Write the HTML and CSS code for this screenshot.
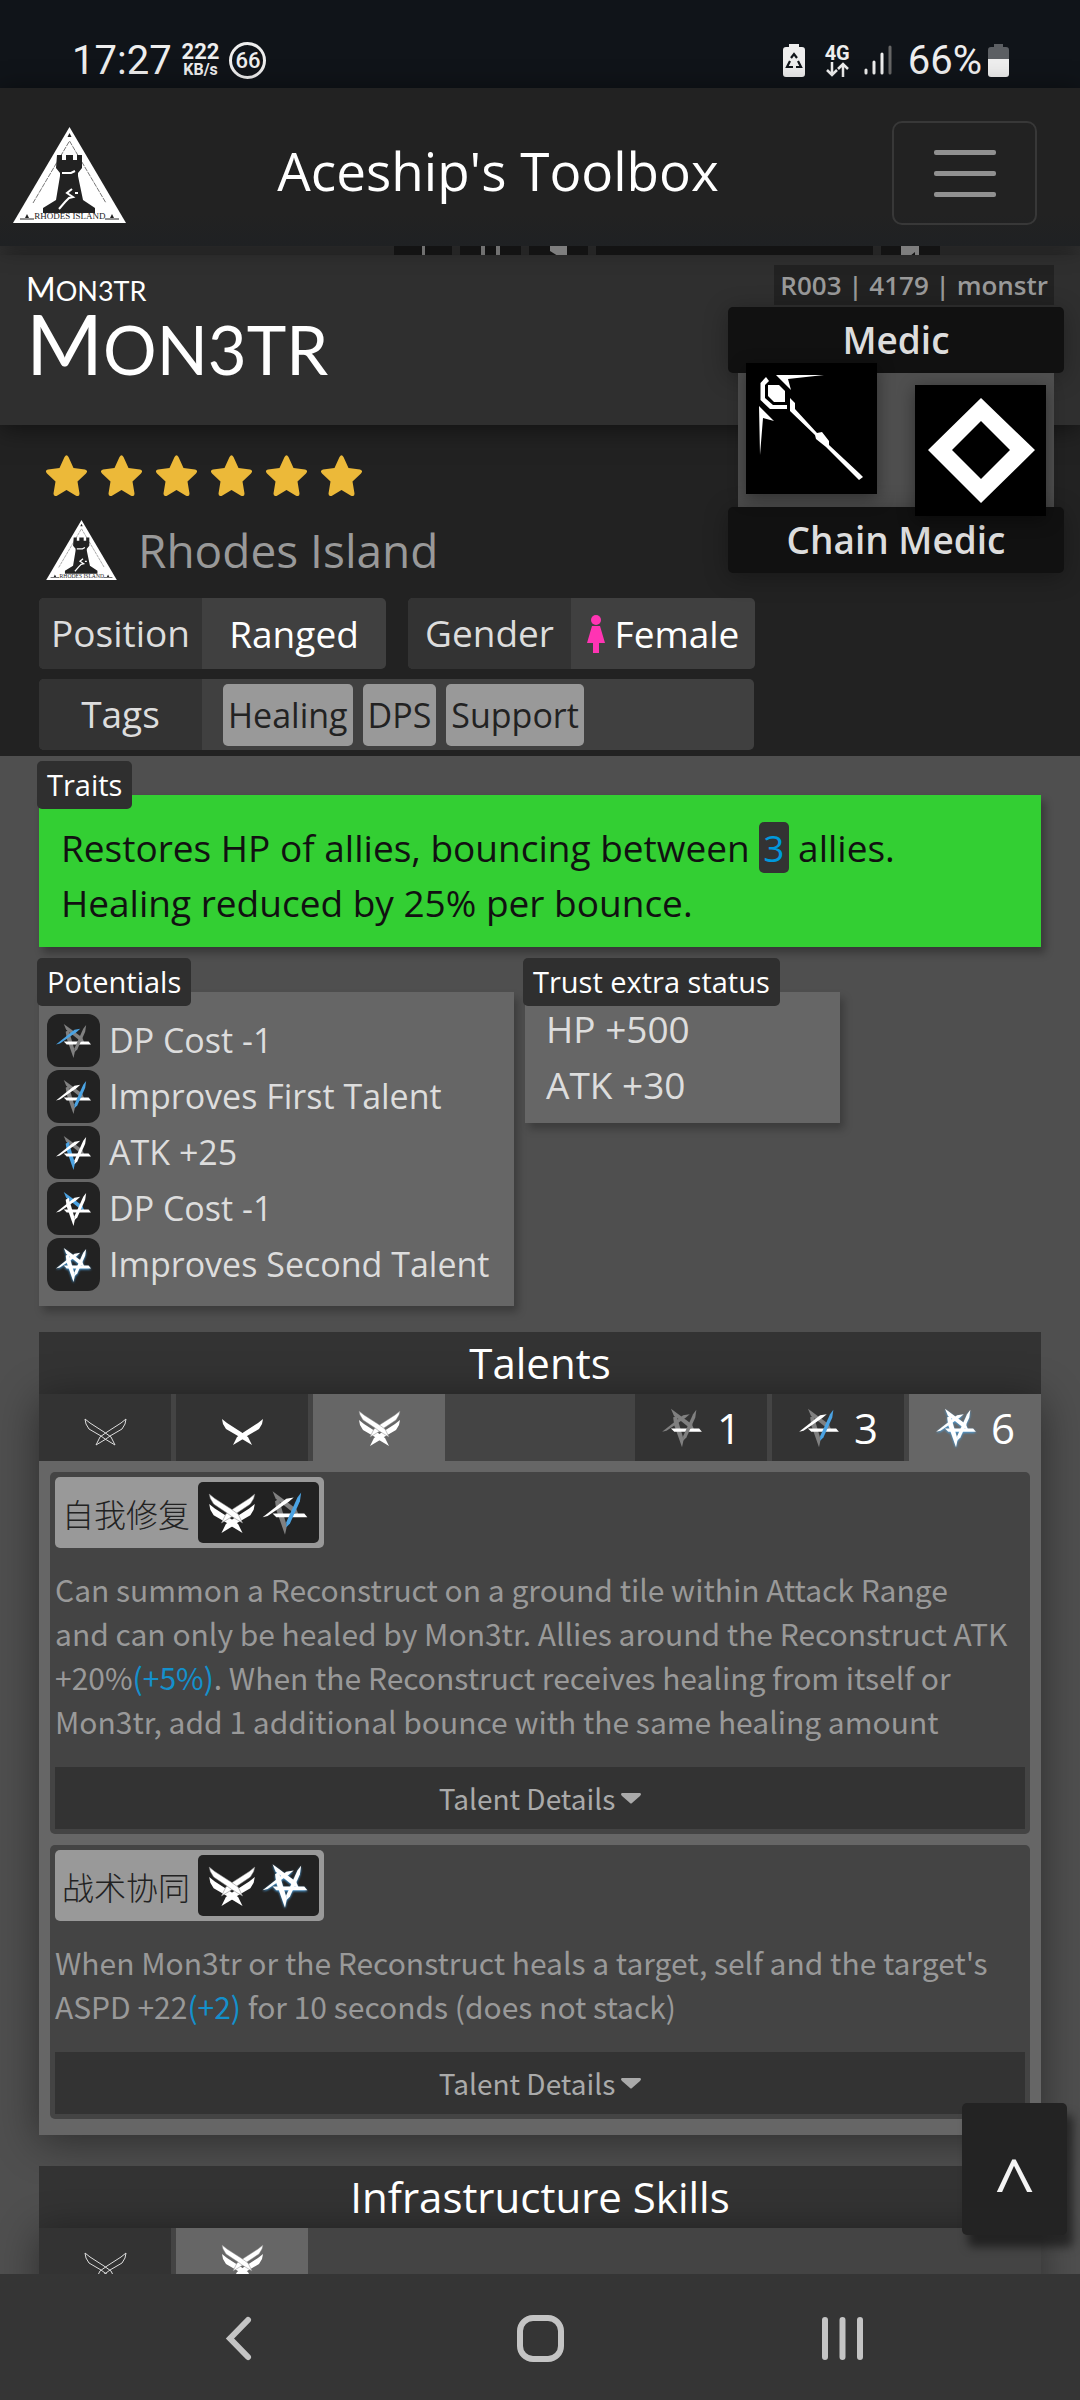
FILE: index.html
```html
<!DOCTYPE html>
<html lang="en">
<head>
    <meta charset="UTF-8">
    <meta name="viewport" content="width=device-width, initial-scale=1.0">
    <title>Aceship's Toolbox</title>
    <link rel="stylesheet" href="styles.css">
</head>
<body>
    <!-- shared icons -->
    <svg class="defs" width="0" height="0" aria-hidden="true">
        <symbol id="rhodes" viewBox="0 0 113 96">
            <path fill="#fff" d="M56.500 0L113 96H0z"/>
            <path fill="none" stroke="#777" stroke-dasharray="5 1" d="M20 76L56.500 14L93 76"/>
            <path fill="#222" d="M56.500 6l2 4h-4zM44 28h5v5h4v-5h7v5h4v-5h5v13l-4 5v3l5 24 12 8v5H30v-5l13-8 4-24v-3l-4-5z"/>
            <path fill="none" stroke="#fff" stroke-width="2" d="M46 82l6-7 4-4 4-1-6-4 5-4M49 46h9l4-2M62 66h3"/>
            <path stroke="#222" d="M7 92h14M92 92h14"/>
            <path fill="#222" d="M14 87l2 4h-4zM99 87l2 4h-4z"/>
            <text x="57" y="92" text-anchor="middle" class="logo-text">RHODES ISLAND</text>
        </symbol>
        <symbol id="star" viewBox="0 0 41 41">
            <path fill="#ecb939" d="M18.500 2q2-3.500 4 0l5 11 11.500 1.500q3.500 1 1 4l-8.500 8 2 12q0 3.500-3.500 2.300L20.500 35 11 40.800q-3.500 1-3.500-2.300l2-12-8.500-8q-2.500-3 1-4L13.500 13z"/>
        </symbol>
        <symbol id="potential" viewBox="8 8 38 37">
            <path class="blade-5" d="M17 9L36 23L38 28L34 26.500L19.500 15z"/>
            <path class="blade-4" d="M27 44L20 24L19 17L22 15L28.500 37z"/>
            <path class="blade-1" d="M17 27H42.500L45 30H20z"/>
            <path class="blade-2" d="M9 30L28 15L34 14L30 17.500L13 29z"/>
            <path class="blade-3" d="M40 10L39 17L31 35L28 38L28 34L37 14z"/>
        </symbol>
        <symbol id="elite0" viewBox="-1 -9 43 36">
            <g fill="none" stroke="#ddd">
                <path d="M0 0L5 4L19 13L26 18L30 26L20 20L16 17L4 10L1 5z"/>
                <path d="M41 0L36 4L22 13L15 18L11 26L21 20L25 17L37 10L40 5z"/>
            </g>
        </symbol>
        <symbol id="elite1" viewBox="-1 -9 43 36">
            <path fill="#fff" d="M0 0L5 4L19 13L26 18L30 26L20 20L16 17L4 10L1 5z"/>
            <path fill="#fff" d="M41 0L36 4L22 13L15 18L11 26L21 20L25 17L37 10L40 5z"/>
        </symbol>
        <symbol id="elite2" viewBox="-1 -1 43 36">
            <g fill="#fff">
                <path d="M0 9L5 13L19 22L26 27L30 35L20 29L16 26L4 19L1 14z"/>
                <path d="M41 9L36 13L22 22L15 27L11 35L21 29L25 26L37 19L40 14z"/>
            </g>
            <g fill="#fff" stroke="#888" stroke-width=".5">
                <path d="M41 0L36 4L22 13L15 18L11 26L21 20L25 17L37 9L40 4z"/>
                <path d="M0 0L5 4L19 13L26 18L30 26L20 20L16 17L4 9L1 4z"/>
            </g>
        </symbol>
    </svg>

    <div class="statusbar">
        <span class="clock">17:27</span>
        <span class="speed"><b>222</b><small>KB/s</small></span>
        <span class="ring">66</span>
        <svg class="saver" width="22" height="33" viewBox="0 0 22 33">
            <path fill="#eee" d="M6 0h10v3h3q3 0 3 3v24q0 3-3 3H3q-3 0-3-3V6q0-3 3-3h3z"/>
            <path fill="none" stroke="#101419" stroke-width="2.200" d="M8 14l3-4 3 4M15 17l3 6h-5M10 23H4l3-6"/>
        </svg>
        <span class="network">4G
            <svg width="24" height="15" viewBox="0 0 24 15"><path fill="none" stroke="#eee" stroke-width="2.500" d="M7 0v13M2 8l5 5 5-5M18 15V2M13 7l5-5 5 5"/></svg>
        </span>
        <svg class="signal" width="28" height="30" viewBox="0 0 28 30">
            <path stroke="#eee" stroke-width="3" stroke-linecap="round" d="M2 25v3M10 17v11M18 9v19"/>
            <path stroke="#666" stroke-width="3" stroke-linecap="round" d="M26 2v26"/>
        </svg>
        <span class="percent">66%</span>
        <svg class="battery" width="21" height="33" viewBox="0 0 21 33">
            <path fill="#5c5f63" d="M6 0h9v3h3q3 0 3 3v9H0V6q0-3 3-3h3z"/>
            <path fill="#eee" d="M0 15h21v15q0 3-3 3H3q-3 0-3-3z"/>
        </svg>
    </div>

    <header class="navbar">
        <a class="home" href="#" aria-label="Home"><svg width="113" height="96"><use href="#rhodes"/></svg></a>
        <span class="navbar-title">Aceship's Toolbox</span>
        <button class="toggler" aria-label="Menu"><i></i><i></i><i></i></button>
    </header>

    <main>
        <div class="art-strip">
            <span class="cell"><svg width="58" height="10"><path fill="#999" d="M28 0h3v10h-3z"/></svg></span>
            <span class="cell"><svg width="61" height="10"><path fill="#999" d="M21 0h4v10h-4zM36 0h4v10h-4z"/></svg></span>
            <span class="cell"><svg width="59" height="10"><path fill="#aaa" d="M21 0h17v10h-9l-8-5z"/></svg></span>
            <span class="cell wide"></span>
            <span class="cell"><svg width="59" height="10"><path fill="#aaa" d="M20 0h18v10h-4V6l-5 4h-9z"/></svg></span>
        </div>

        <section class="hero">
            <div class="name-band">
                <div class="name-small">MON3TR</div>
                <h1 class="name-big">MON3TR</h1>
            </div>

            <div class="class-card">
                <div class="codes">R003 | 4179 | monstr</div>
                <div class="class-name">Medic</div>
                <div class="class-icons">
                    <svg class="class-icon" width="131" height="131" viewBox="0 0 131 131">
                        <g fill="#fff">
                            <path d="M20 14L14.500 20V37L24 46H41V42H27L19 35V22L23 18z"/>
                            <path d="M22 22H33L39 28V39H28L22 33z"/>
                            <path d="M30 12H78L42 16L45 27z"/>
                            <path d="M13 43L28 58L17 55L14 92z"/>
                            <path d="M44 35L49 40V46L71 70L76 69L83 78V82L113 110L117 114L113 117L109 113L80 84L70 76L69 72L44 48z"/>
                        </g>
                    </svg>
                    <svg class="class-icon branch" width="131" height="131" viewBox="0 0 131 131">
                        <path fill="#fff" fill-rule="evenodd" d="M66 13L120 65L66 118L13 65zM66 36L37 65L66 94L95 65z"/>
                    </svg>
                </div>
                <div class="class-name">Chain Medic</div>
            </div>

            <div class="info">
                <div class="stars">
                    <svg width="41" height="41"><use href="#star"/></svg>
                    <svg width="41" height="41"><use href="#star"/></svg>
                    <svg width="41" height="41"><use href="#star"/></svg>
                    <svg width="41" height="41"><use href="#star"/></svg>
                    <svg width="41" height="41"><use href="#star"/></svg>
                    <svg width="41" height="41"><use href="#star"/></svg>
                </div>
                <div class="faction">
                    <svg width="71" height="60"><use href="#rhodes"/></svg>
                    <span>Rhodes Island</span>
                </div>
                <div class="facts">
                    <div class="fact"><span class="fact-label">Position</span><span class="fact-value">Ranged</span></div>
                    <div class="fact"><span class="fact-label">Gender</span><span class="fact-value">
                        <svg width="18" height="38" viewBox="0 0 18 38"><circle cx="9" cy="5" r="5" fill="#ff34b3"/><path fill="#ff34b3" d="M5 11h8l5 17h-6v10H6V28H0z"/></svg>
                        Female</span></div>
                    <div class="fact tags"><span class="fact-label">Tags</span><span class="fact-value">
                        <span class="tag">Healing</span><span class="tag">DPS</span><span class="tag">Support</span></span></div>
                </div>
            </div>
        </section>

        <section class="panel">
            <h2 class="panel-label">Traits</h2>
            <p class="trait">Restores HP of allies, bouncing between <span class="value">3</span> allies.<br>Healing reduced by 25% per bounce.</p>
        </section>

        <div class="columns">
            <section class="panel">
                <h2 class="panel-label">Potentials</h2>
                <ul class="potentials">
                    <li><span class="pot-icon"><svg class="pot p2" width="37" height="36"><use href="#potential"/></svg></span>DP Cost -1</li>
                    <li><span class="pot-icon"><svg class="pot p3" width="37" height="36"><use href="#potential"/></svg></span>Improves First Talent</li>
                    <li><span class="pot-icon"><svg class="pot p4" width="37" height="36"><use href="#potential"/></svg></span>ATK +25</li>
                    <li><span class="pot-icon"><svg class="pot p5" width="37" height="36"><use href="#potential"/></svg></span>DP Cost -1</li>
                    <li><span class="pot-icon"><svg class="pot p6" width="37" height="36"><use href="#potential"/></svg></span>Improves Second Talent</li>
                </ul>
            </section>
            <section class="panel">
                <h2 class="panel-label">Trust extra status</h2>
                <ul class="trust">
                    <li>HP +500</li>
                    <li>ATK +30</li>
                </ul>
            </section>
        </div>

        <section class="block">
            <h2 class="block-title">Talents</h2>
            <div class="block-main">
                <div class="tabs">
                    <button class="tab" aria-label="Elite 0"><svg width="43" height="36"><use href="#elite0"/></svg></button>
                    <button class="tab" aria-label="Elite 1"><svg width="43" height="36"><use href="#elite1"/></svg></button>
                    <button class="tab active" aria-label="Elite 2"><svg width="43" height="36"><use href="#elite2"/></svg></button>
                    <button class="tab push"><svg class="pot p1" width="42" height="42"><use href="#potential"/></svg>1</button>
                    <button class="tab"><svg class="pot p3" width="42" height="42"><use href="#potential"/></svg>3</button>
                    <button class="tab active"><svg class="pot p6" width="42" height="42"><use href="#potential"/></svg>6</button>
                </div>
                <div class="talents">
                    <article class="talent">
                        <h3 class="talent-name" lang="zh">自我修复
                            <span class="requires"><svg width="48" height="40"><use href="#elite2"/></svg><svg class="pot p3" width="48" height="46"><use href="#potential"/></svg></span>
                        </h3>
                        <p>Can summon a Reconstruct on a ground tile within Attack Range<br>and can only be healed by Mon3tr. Allies around the Reconstruct ATK +20%<span class="bonus">(+5%)</span>. When the Reconstruct receives healing from itself or Mon3tr, add 1 additional bounce with the same healing amount</p>
                        <button class="details">Talent Details <svg width="20" height="11" viewBox="0 0 20 11"><path fill="#aaa" d="M1 0h18q2 1 0 3l-8 7q-1 1-2 0L1 3q-2-2 0-3z"/></svg></button>
                    </article>
                    <article class="talent">
                        <h3 class="talent-name" lang="zh">战术协同
                            <span class="requires"><svg width="48" height="40"><use href="#elite2"/></svg><svg class="pot p6" width="48" height="46"><use href="#potential"/></svg></span>
                        </h3>
                        <p>When Mon3tr or the Reconstruct heals a target, self and the target's ASPD +22<span class="bonus">(+2)</span> for 10 seconds (does not stack)</p>
                        <button class="details">Talent Details <svg width="20" height="11" viewBox="0 0 20 11"><path fill="#aaa" d="M1 0h18q2 1 0 3l-8 7q-1 1-2 0L1 3q-2-2 0-3z"/></svg></button>
                    </article>
                </div>
            </div>
        </section>

        <section class="block">
            <h2 class="block-title">Infrastructure Skills</h2>
            <div class="block-main">
                <div class="tabs">
                    <button class="tab" aria-label="Elite 0"><svg width="43" height="36"><use href="#elite0"/></svg></button>
                    <button class="tab active" aria-label="Elite 2"><svg width="43" height="36"><use href="#elite2"/></svg></button>
                </div>
            </div>
        </section>

        <button class="to-top" aria-label="Back to top">^</button>
    </main>

    <nav class="softkeys">
        <button aria-label="Back"><svg width="47" height="47" viewBox="0 0 47 47"><path d="M34 5L16 23.500L34 42"/></svg></button>
        <button aria-label="Home"><svg width="47" height="47" viewBox="0 0 47 47"><rect x="3" y="3" width="41" height="41" rx="13"/></svg></button>
        <button aria-label="Recent apps"><svg width="47" height="47" viewBox="0 0 47 47"><path d="M6 5v37M23.500 5v37M41 5v37"/></svg></button>
    </nav>
</body>
</html>
```
FILE: styles.css
```css
* {
    box-sizing: border-box;
}

body {
    margin: 0;
    height: 100vh;
    display: flex;
    flex-direction: column;
    background: #4f4f4f;
    color: #ddd;
    font-family: "Open Sans", "Noto Sans", "Noto Sans CJK SC", sans-serif;
    font-size: 37px;
}

h1, h2, h3, p, ul {
    margin: 0;
    padding: 0;
    font-weight: 400;
    list-style: none;
}

button {
    border: 0;
    padding: 0;
    background: none;
    color: inherit;
    font: inherit;
}

svg {
    display: block;
    flex: none;
}

.defs {
    position: absolute;
}

.logo-text {
    font: 9px "Liberation Serif", serif;
    fill: #222;
}

/* phone status bar */
.statusbar {
    height: 88px;
    flex: none;
    display: flex;
    align-items: center;
    padding: 32px 71px 0 72px;
    background: #101419;
    color: #eee;
    font-family: Roboto, sans-serif;
    font-size: 40px;
}

.speed {
    display: flex;
    flex-direction: column;
    align-items: center;
    margin: 0 10px;
    font-size: 22px;
    line-height: 19px;
}

.speed small {
    font-size: 16px;
    font-weight: 700;
    line-height: 17px;
}

.ring {
    width: 37px;
    height: 37px;
    border: 3px solid #eee;
    border-radius: 50%;
    font-size: 22px;
    font-weight: 500;
    line-height: 31px;
    text-align: center;
}

.saver {
    margin-left: auto;
}

.network {
    margin: 0 14px 0 20px;
    font-size: 20px;
    font-weight: 700;
    line-height: 18px;
}

.percent {
    margin: 0 6px 0 16px;
}

/* site header */
.navbar {
    height: 158px;
    flex: none;
    display: flex;
    align-items: center;
    padding: 12px 43px 0 13px;
    background: linear-gradient(#222 80%, #1f2123);
    box-shadow: 0 0 24px rgba(0, 0, 0, .4);
    z-index: 2;
}

.home {
    margin-top: 4px;
}

.navbar-title {
    flex: 1;
    padding-right: 22px;
    color: #fff;
    font-size: 53px;
    line-height: 72px;
    padding-bottom: 4px;
    text-align: center;
}

.toggler {
    width: 145px;
    height: 104px;
    display: flex;
    flex-direction: column;
    align-items: center;
    justify-content: center;
    gap: 16px;
    border: 2px solid #383838;
    border-radius: 10px;
}

.toggler i {
    width: 62px;
    height: 5px;
    border-radius: 2px;
    background: #919191;
}

main {
    flex: 1;
    min-height: 0;
    overflow: hidden;
    position: relative;
}

.art-strip {
    height: 9px;
    display: flex;
    gap: 8px;
    padding-left: 394px;
    overflow: hidden;
    background: #333;
}

.cell {
    height: 10px;
    background: #1b1b1b;
}

.cell.wide {
    width: 277px;
}

/* operator summary */
.hero {
    position: relative;
    background: #222;
}

.name-band {
    height: 170px;
    padding: 18px 26px;
    background: #2f2f2f;
    box-shadow: 0 4px 24px rgba(0, 0, 0, .5);
    color: #fff;
    font-family: Lato, sans-serif;
}

.name-small {
    font-size: 27px;
    line-height: 32px;
}

.name-small::first-letter {
    font-size: 32px;
}

.name-big {
    font-size: 67px;
    line-height: 72px;
}

.name-big::first-letter {
    font-size: 83px;
}

.class-card {
    position: absolute;
    top: 10px;
    right: 16px;
    width: 336px;
    display: flex;
    flex-direction: column;
    font-weight: 600;
    text-align: center;
}

.codes {
    align-self: flex-end;
    margin: 0 10px 2px;
    padding: 0 6px;
    background: #222;
    color: #999;
    font-size: 26px;
    line-height: 40px;
}

.class-name {
    border-radius: 5px;
    background: #111;
    box-shadow: 0 4px 24px rgba(0, 0, 0, .3);
    line-height: 66px;
}

.class-icons {
    height: 134px;
    display: flex;
    justify-content: space-between;
    margin: 0 10px;
    padding: 0 8px;
    background: #4f4f4f;
}

.class-icon {
    position: relative;
    top: -10px;
    background: #000;
    box-shadow: 0 4px 16px rgba(0, 0, 0, .4);
}

.class-icon.branch {
    top: 12px;
}

.info {
    padding: 30px 39px 6px;
}

.stars {
    display: flex;
    gap: 14px;
    padding-left: 7px;
}

.faction {
    display: flex;
    align-items: center;
    gap: 21px;
    margin: 24px 0 18px;
    padding-left: 7px;
    color: #999;
    font-size: 46px;
    line-height: 60px;
}

.facts {
    display: flex;
    flex-wrap: wrap;
    gap: 10px 22px;
}

.fact {
    width: 347px;
    height: 71px;
    display: flex;
    border-radius: 5px;
    overflow: hidden;
    background: #404040;
    line-height: 70px;
}

.fact.tags {
    width: 715px;
}

.fact-label {
    width: 163px;
    background: #333;
    text-align: center;
}

.fact-value {
    flex: 1;
    display: flex;
    align-items: center;
    justify-content: center;
    gap: 10px;
    color: #fff;
}

.tags .fact-value {
    justify-content: flex-start;
    padding-left: 21px;
}

.tag {
    padding: 0 5px;
    border-radius: 5px;
    background: #999;
    color: #222;
    font-size: 34px;
    line-height: 62px;
}

/* labelled panels */
.panel {
    margin: 5px 39px 0;
}

.panel-label {
    position: relative;
    width: max-content;
    margin: 0 0 -14px -2px;
    padding: 0 10px;
    border-radius: 5px;
    background: #2f2f2f;
    color: #fff;
    font-size: 29px;
    line-height: 48px;
}

.trait {
    padding: 25px 22px 17px;
    background: #33cf33;
    box-shadow: 4px 6px 8px rgba(0, 0, 0, .3);
    color: #111;
    line-height: 55px;
}

.value {
    padding: 0 4px;
    border-radius: 5px;
    background: #333;
    color: #0098dc;
}

.columns {
    display: flex;
    align-items: flex-start;
    gap: 11px;
    margin: 11px 39px 26px;
}

.columns .panel {
    margin: 0;
}

.potentials, .trust {
    background: #666;
    box-shadow: 4px 6px 8px rgba(0, 0, 0, .25);
}

.potentials {
    width: 475px;
    display: grid;
    gap: 3px;
    padding: 22px 8px 15px;
    font-size: 34px;
    line-height: 53px;
}

.potentials li {
    display: flex;
    gap: 9px;
}

.pot-icon {
    width: 53px;
    height: 53px;
    display: flex;
    align-items: center;
    justify-content: center;
    border-radius: 12px;
    background: #222;
}

.trust {
    width: 315px;
    padding: 9px 21px 10px;
    line-height: 56px;
}

/* potential star, one blade lit per level */
.pot {
    --b1: #fff;
    --b2: #808080;
    --b3: #808080;
    --b4: #808080;
    --b5: #808080;
}

.blade-1 { fill: var(--b1); }
.blade-2 { fill: var(--b2); }
.blade-3 { fill: var(--b3); }
.blade-4 { fill: var(--b4); }
.blade-5 { fill: var(--b5); }

.p2 { --b2: #4ba3e3; }
.p3 { --b2: #fff; --b3: #4ba3e3; }
.p4 { --b2: #fff; --b3: #fff; --b4: #4ba3e3; }
.p5 { --b2: #fff; --b3: #fff; --b4: #fff; --b5: #4ba3e3; }
.p6 { --b2: #fff; --b3: #fff; --b4: #fff; --b5: #fff; filter: drop-shadow(0 1px 1px #4ba3e3); }

/* talents and base skills */
.block {
    margin: 0 39px 31px;
}

.block-title {
    background: #333;
    color: #fff;
    font-size: 42px;
    line-height: 62px;
    text-align: center;
}

.block-main {
    background: #666;
    box-shadow: 0 6px 40px rgba(0, 0, 0, .45);
}

.tabs {
    display: flex;
    gap: 5px;
    background: #444;
}

.tab {
    width: 132px;
    height: 67px;
    display: flex;
    align-items: center;
    justify-content: center;
    gap: 14px;
    background: #333;
    color: #fff;
    font-size: 42px;
}

.tab.active {
    background: #666;
}

.tab.push {
    margin-left: auto;
}

.talents {
    display: grid;
    gap: 11px;
    padding: 11px 11px 16px;
}

.talent {
    padding: 5px;
    border-radius: 5px;
    background: #444;
    color: #999;
    font-family: "Noto Sans CJK SC", sans-serif;
    font-size: 30px;
}

.talent-name {
    width: max-content;
    display: flex;
    align-items: center;
    gap: 8px;
    padding: 5px 5px 5px 7px;
    border-radius: 5px;
    background: #999;
    color: #222;
    font-size: 32px;
    font-weight: 300;
}

.requires {
    width: 121px;
    height: 61px;
    display: flex;
    align-items: center;
    justify-content: center;
    gap: 5px;
    border-radius: 5px;
    background: #222;
}

.talent p {
    padding: 19px 0 24px;
    line-height: 44px;
}

.bonus {
    color: #1490cc;
}

.details {
    width: 100%;
    height: 62px;
    display: flex;
    align-items: center;
    justify-content: center;
    gap: 6px;
    background: #333;
    color: #aaa;
    font-size: 28px;
}

.to-top {
    position: absolute;
    right: 13px;
    bottom: 39px;
    width: 105px;
    height: 132px;
    padding-top: 28px;
    border-radius: 5px;
    background: #232323;
    box-shadow: 6px 12px 10px rgba(0, 0, 0, .5);
    color: #f4f4f4;
    font-size: 72px;
}

/* phone navigation keys */
.softkeys {
    height: 126px;
    flex: none;
    display: flex;
    align-items: center;
    padding: 2px 86px 0;
    background: #353535;
    z-index: 2;
}

.softkeys button {
    flex: 1;
    display: flex;
    justify-content: center;
}

.softkeys svg {
    fill: none;
    stroke: #c4c4c4;
    stroke-width: 6;
    stroke-linecap: round;
}
```
